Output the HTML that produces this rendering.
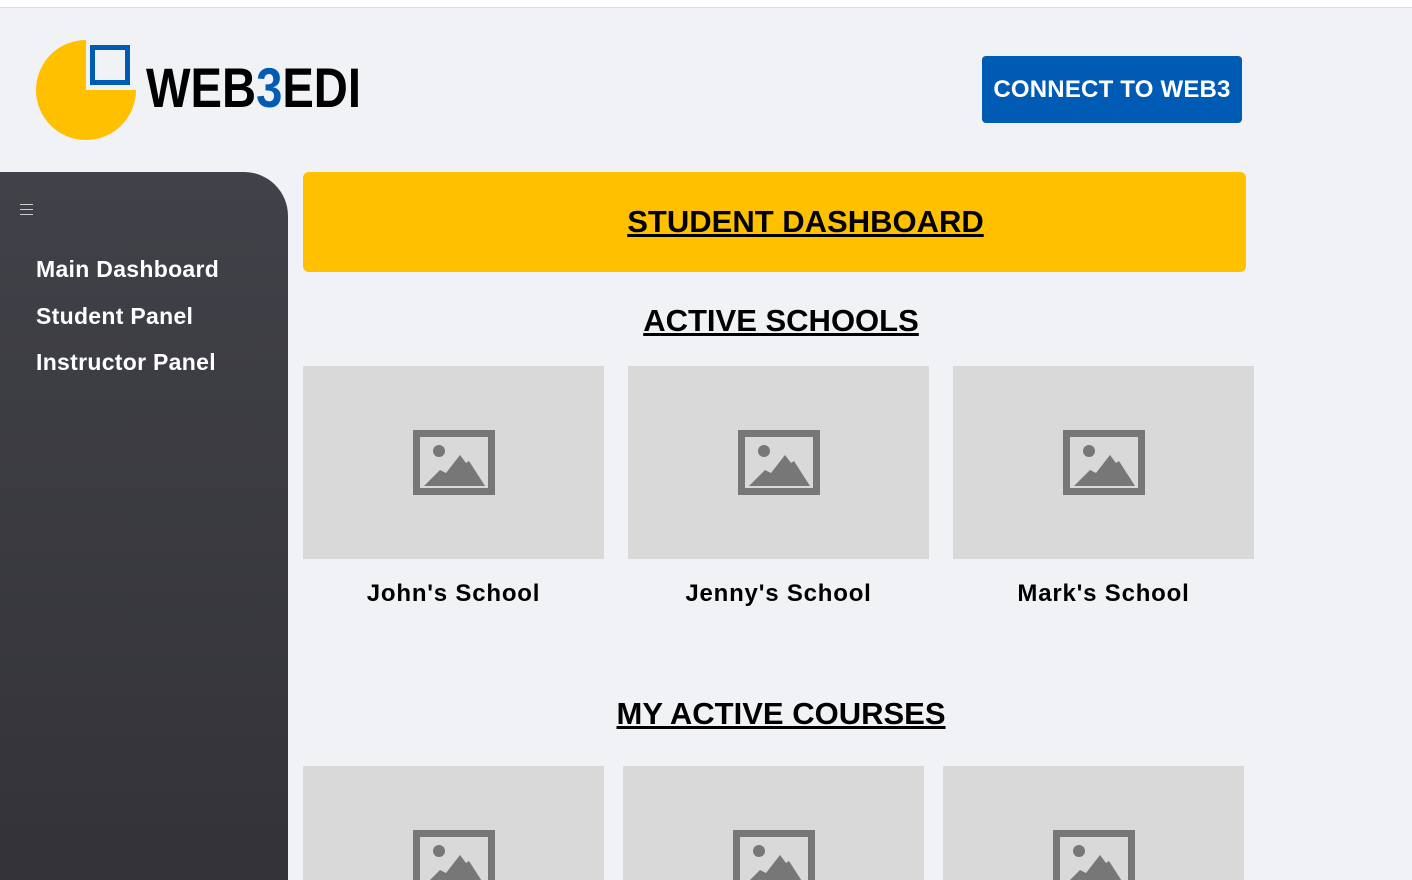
<!DOCTYPE html><html style="overflow:hidden;height:880px"><head><style>
body{margin:0;width:1412px;height:880px;overflow:hidden;background:#f0f2f6;font-family:"Liberation Sans",sans-serif;position:relative}
.top{position:absolute;left:0;top:0;width:1412px;height:7px;background:#fff;border-bottom:1px solid #ddd}
.side{position:absolute;left:0;top:172px;width:288px;height:708px;background:linear-gradient(#414249,#333337);border-top-right-radius:44px}
.side a{position:absolute;left:36px;color:#fff;font-weight:bold;font-size:23px;text-decoration:none;letter-spacing:0.3px}
.btn{position:absolute;left:982px;top:56px;width:260px;height:67px;background:#005bb5;border-radius:4px;color:#fff;font-weight:bold;font-size:24px;line-height:67px;text-align:center;letter-spacing:0.2px}
.ban{position:absolute;left:303px;top:172px;width:943px;height:100px;background:#ffc000;border-radius:6px;text-align:center;line-height:100px;font-weight:bold;font-size:31px;text-decoration:underline;color:#000;box-sizing:border-box;padding-left:62px}
h2{position:absolute;margin:0;font-size:31px;font-weight:bold;text-decoration:underline;text-align:center;color:#000}
.card{position:absolute;width:301px;height:193px;background:#d9d9d9}
.card svg{position:absolute;left:110px;top:64px}
.lbl{position:absolute;width:301px;text-align:center;font-weight:bold;font-size:24px;top:580px;letter-spacing:0.8px}
</style></head><body>
<div class="top"></div>
<svg style="position:absolute;left:30px;top:35px" width="340" height="110">
<path d="M56 5 A50 50 0 1 0 106 55 L56 55 Z" fill="#ffc000"/>
<rect x="62.5" y="12.5" width="35" height="35" fill="none" stroke="#005bb5" stroke-width="5"/>
<text x="116" y="72" font-family="Liberation Sans,sans-serif" font-weight="bold" font-size="56" fill="#000" textLength="215" lengthAdjust="spacingAndGlyphs">WEB<tspan fill="#005bb5">3</tspan>EDI</text>
</svg>
<div class="btn">CONNECT TO WEB3</div>
<div class="side">
<div style="position:absolute;left:20px;top:32px;width:13px;height:9px;border-top:1px solid #ccc;border-bottom:1px solid #ccc"><div style="margin-top:4px;height:1px;background:#ccc"></div></div>
<a style="top:84px">Main Dashboard</a>
<a style="top:131px">Student Panel</a>
<a style="top:177px">Instructor Panel</a>
</div>
<div class="ban">STUDENT DASHBOARD</div>
<h2 style="left:303px;width:956px;top:303px">ACTIVE SCHOOLS</h2>
<h2 style="left:303px;width:956px;top:696px">MY ACTIVE COURSES</h2>
<div class="card" style="left:303px;top:366px"><svg width="82" height="66"><rect x="3.5" y="3.5" width="75" height="58" fill="none" stroke="#777" stroke-width="7"/><circle cx="26" cy="21" r="6" fill="#777"/><path d="M11 56 L27 40 L33 43 L47 25 L53 33 L56 31 L72 56 Z" fill="#777"/></svg></div>
<div class="card" style="left:628px;top:366px"><svg width="82" height="66"><rect x="3.5" y="3.5" width="75" height="58" fill="none" stroke="#777" stroke-width="7"/><circle cx="26" cy="21" r="6" fill="#777"/><path d="M11 56 L27 40 L33 43 L47 25 L53 33 L56 31 L72 56 Z" fill="#777"/></svg></div>
<div class="card" style="left:953px;top:366px"><svg width="82" height="66"><rect x="3.5" y="3.5" width="75" height="58" fill="none" stroke="#777" stroke-width="7"/><circle cx="26" cy="21" r="6" fill="#777"/><path d="M11 56 L27 40 L33 43 L47 25 L53 33 L56 31 L72 56 Z" fill="#777"/></svg></div>
<div class="lbl" style="left:303px">John's School</div>
<div class="lbl" style="left:628px">Jenny's School</div>
<div class="lbl" style="left:953px">Mark's School</div>
<div class="card" style="left:303px;top:766px;height:114px"><svg width="82" height="66"><rect x="3.5" y="3.5" width="75" height="58" fill="none" stroke="#777" stroke-width="7"/><circle cx="26" cy="21" r="6" fill="#777"/><path d="M11 56 L27 40 L33 43 L47 25 L53 33 L56 31 L72 56 Z" fill="#777"/></svg></div>
<div class="card" style="left:623px;top:766px;height:114px"><svg width="82" height="66"><rect x="3.5" y="3.5" width="75" height="58" fill="none" stroke="#777" stroke-width="7"/><circle cx="26" cy="21" r="6" fill="#777"/><path d="M11 56 L27 40 L33 43 L47 25 L53 33 L56 31 L72 56 Z" fill="#777"/></svg></div>
<div class="card" style="left:943px;top:766px;height:114px"><svg width="82" height="66"><rect x="3.5" y="3.5" width="75" height="58" fill="none" stroke="#777" stroke-width="7"/><circle cx="26" cy="21" r="6" fill="#777"/><path d="M11 56 L27 40 L33 43 L47 25 L53 33 L56 31 L72 56 Z" fill="#777"/></svg></div>
</body></html>
